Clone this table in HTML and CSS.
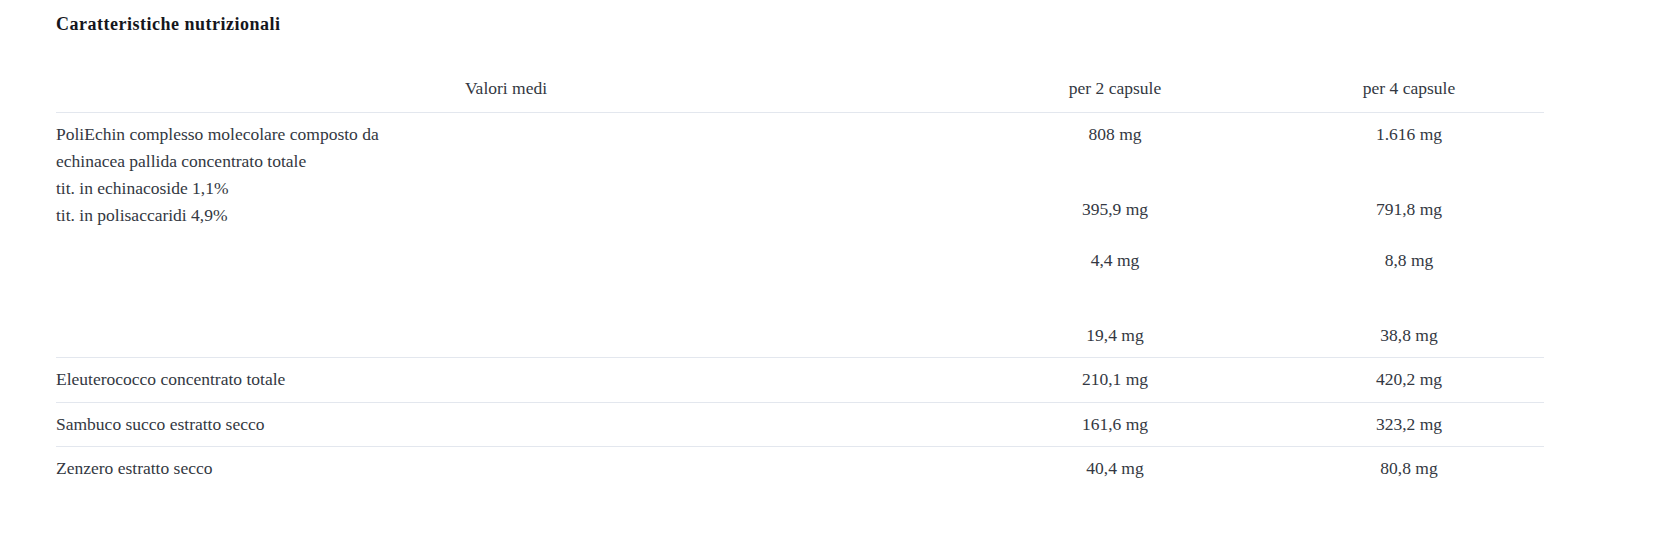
FILE: index.html
```html
<!DOCTYPE html>
<html lang="it">
<head>
<meta charset="utf-8">
<title>Caratteristiche nutrizionali</title>
<link rel="stylesheet" href="styles.css">
</head>
<body>
<section class="nutrition">
  <h2 class="nutrition-title">Caratteristiche nutrizionali</h2>
  <table class="nutrition-table">
    <colgroup>
      <col class="col-name">
      <col class="col-a">
      <col class="col-b">
    </colgroup>
    <thead>
      <tr>
        <th>Valori medi</th>
        <th>per 2 capsule</th>
        <th>per 4 capsule</th>
      </tr>
    </thead>
    <tbody>
      <tr>
        <td class="name">
          <div>PoliEchin complesso molecolare composto da</div>
          <div>echinacea pallida concentrato totale</div>
          <div>tit. in echinacoside 1,1%</div>
          <div>tit. in polisaccaridi 4,9%</div>
        </td>
        <td>
          <div>808 mg</div>
          <div class="gap-a">395,9 mg</div>
          <div class="gap-b">4,4 mg</div>
          <div class="gap-c">19,4 mg</div>
        </td>
        <td>
          <div>1.616 mg</div>
          <div class="gap-a">791,8 mg</div>
          <div class="gap-b">8,8 mg</div>
          <div class="gap-c">38,8 mg</div>
        </td>
      </tr>
      <tr>
        <td class="name">Eleuterococco concentrato totale</td>
        <td>210,1 mg</td>
        <td>420,2 mg</td>
      </tr>
      <tr>
        <td class="name">Sambuco succo estratto secco</td>
        <td>161,6 mg</td>
        <td>323,2 mg</td>
      </tr>
      <tr>
        <td class="name">Zenzero estratto secco</td>
        <td>40,4 mg</td>
        <td>80,8 mg</td>
      </tr>
    </tbody>
  </table>
</section>
</body>
</html>
```

FILE: styles.css
```css
html, body {
  margin: 0;
  padding: 0;
  background: #ffffff;
}

body {
  font-family: "Liberation Serif", "Times New Roman", serif;
  color: #333842;
}

.nutrition {
  padding: 11px 0 0 56px;
}

.nutrition-title {
  margin: 0 0 30px 0;
  font-size: 18px;
  line-height: 27px;
  font-weight: bold;
  letter-spacing: 0.5px;
  color: #15161c;
}

.nutrition-table {
  width: 1488px;
  table-layout: fixed;
  border-collapse: collapse;
  font-size: 17.5px;
  line-height: 27.2px;
}

.col-name { width: 900px; }
.col-a { width: 318px; }
.col-b { width: 270px; }

.nutrition-table th,
.nutrition-table td {
  padding: 8px 0 8.4px 0;
  text-align: center;
  vertical-align: top;
  font-weight: normal;
}

.nutrition-table th {
  padding: 7px 0 9.4px 0;
}

.nutrition-table td.name {
  text-align: left;
}

.nutrition-table thead tr,
.nutrition-table tbody tr {
  border-bottom: 1px solid #e3e7ee;
}

.nutrition-table tbody tr:last-child {
  border-bottom: none;
}

.gap-a { margin-top: 48.5px; }
.gap-b { margin-top: 23px; }
.gap-c { margin-top: 48px; }
```
